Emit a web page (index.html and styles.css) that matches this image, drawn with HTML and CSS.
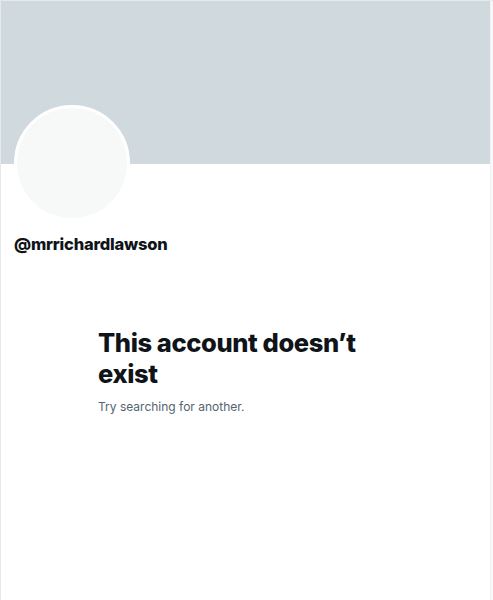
FILE: index.html
```html
<!DOCTYPE html>
<html lang="en">
<head>
  <meta charset="UTF-8">
  <title>Profile</title>
  <link rel="stylesheet" href="styles.css">
</head>
<body>
  <div class="pagina">
    <main class="coluna">
      <div class="banner"></div>

      <div class="perfil">
        <div class="avatar"></div>
        <div class="usuario">@mrrichardlawson</div>
      </div>

      <div class="vazio">
        <h1>This account doesn’t exist</h1>
        <p>Try searching for another.</p>
      </div>
    </main>
    <div class="lateral"></div>
  </div>
</body>
</html>
```

FILE: styles.css
```css
body {
  margin: 0;
  font-family: 'Inter', 'Noto Sans', sans-serif;
  background-color: #ffffff;
  color: #0f1419;
  overflow: hidden;
}

.pagina {
  display: flex;
  height: 100vh;
  border-top: 1px solid #e6eaec;
}

.coluna {
  width: 489px;
  border-left: 1px solid #e6eaec;
  border-right: 1px solid #eff3f4;
}

.lateral {
  flex: 1;
  background-color: #f7f9f9;
}

.banner {
  height: 163px;
  background-color: #cfd9de;
}

.perfil {
  padding: 0 13px;
}

.avatar {
  width: 110px;
  height: 110px;
  margin-top: -59px;
  border: 3px solid #ffffff;
  border-radius: 50%;
  background-color: #f7f9f9;
}

.usuario {
  margin-top: 13px;
  font-size: 16.5px;
  font-weight: 800;
  letter-spacing: -0.2px;
}

.vazio {
  padding: 0 0 0 97px;
  margin-top: 73px;
  width: 290px;
}

.vazio h1 {
  margin: 0;
  font-size: 25.5px;
  line-height: 31px;
  font-weight: 800;
  letter-spacing: -0.4px;
}

.vazio p {
  margin: 10px 0 0;
  font-size: 12px;
  color: #536471;
}
```
